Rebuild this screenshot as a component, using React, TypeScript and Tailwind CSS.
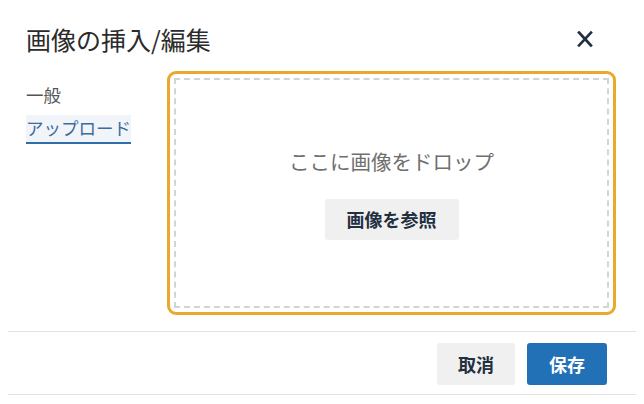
import React from 'react';

const font = { fontFamily: '"Noto Sans CJK JP", "Noto Sans", sans-serif' };

const CloseIcon = () => (
  <svg width="16" height="18" viewBox="0 0 16 18" fill="none">
    <path d="M2 2.5L14 15.5M14 2.5L2 15.5" stroke="#222f3e" strokeWidth="2.6" strokeLinecap="square" />
  </svg>
);

export default function App() {
  return (
    <div className="w-[644px] h-[404px] bg-white overflow-hidden" style={font}>
      <div className="mx-2">
        {/* header */}
        <div className="flex items-center justify-between h-[64px] pt-[14px] pl-[18px] pr-[43px]">
          <h1 className="text-[25px] leading-[48px] text-[#2b2b2b]">画像の挿入/編集</h1>
          <button className="flex items-center justify-center">
            <CloseIcon />
          </button>
        </div>

        {/* body */}
        <div className="flex pt-[7px] pr-[20px]">
          <nav className="w-[159px] pl-[18px] pt-[11px] flex flex-col items-start">
            <span className="text-[17.5px] leading-[26px] text-[#555]">一般</span>
            <span className="mt-[7px] text-[17.5px] leading-[26px] text-[#3c6b9c] bg-[#f1f5fa] border-b-2 border-[#2f6dab] pb-[1px]">
              アップロード
            </span>
          </nav>
          <div className="w-[449px] h-[244px] border-[3px] border-[#eba82c] rounded-[9px] p-[4px]">
            <div className="h-full border-2 border-dashed border-[#d4d4d4] flex flex-col items-center justify-center">
              <p className="text-[20.5px] leading-[28px] text-[#6f6f6f]">ここに画像をドロップ</p>
              <button className="mt-[24px] w-[134px] h-[41px] bg-[#f0f0f0] rounded-[3px] text-[18px] font-bold text-[#222f3e]">
                画像を参照
              </button>
            </div>
          </div>
        </div>

        {/* footer */}
        <div className="mt-[16px] border-t border-b border-[#e3e3e3] flex justify-end gap-[12px] pt-[11px] pb-[9px] pr-[29px]">
          <button className="w-[78px] h-[42px] bg-[#f0f0f0] rounded-[3px] text-[18px] font-bold text-[#222f3e]">
            取消
          </button>
          <button className="w-[80px] h-[42px] bg-[#2270b5] rounded-[3px] text-[18px] font-bold text-white">
            保存
          </button>
        </div>
      </div>
    </div>
  );
}
